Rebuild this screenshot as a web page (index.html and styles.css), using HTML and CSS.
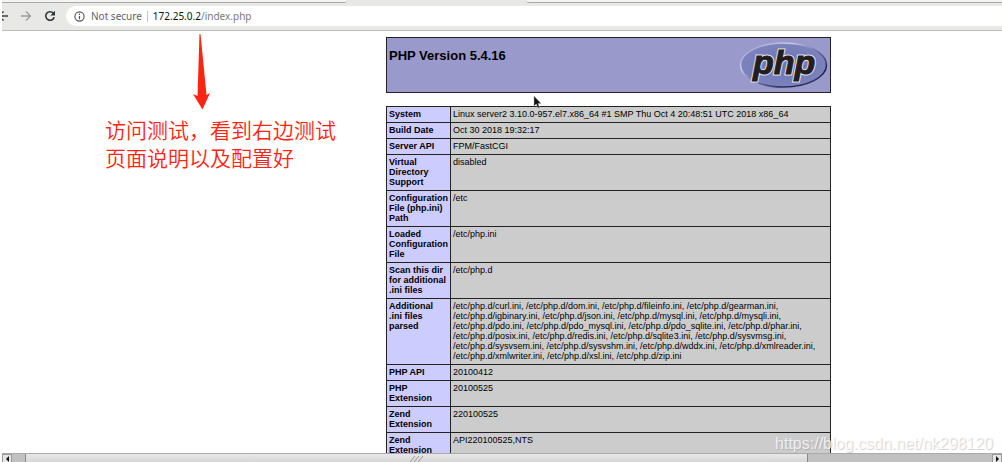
FILE: index.html
```
<!DOCTYPE html>
<html lang="en">
<head>
<meta charset="utf-8">
<title>phpinfo()</title>
<link rel="stylesheet" href="styles.css">
</head>
<body>
<div class="browser">
  <div class="tabs"><span class="tab tab-first"></span><span class="tab tab-rest"></span></div>
  <header class="toolbar">
    <button class="nav nav-back" aria-label="Back"><svg width="8" height="12" viewBox="0 0 8 12"><path d="M0 6H6M0 3L1.500 1.500M0 9L1.500 10.500" fill="none" stroke="#3c4043" stroke-width="1.5"/></svg></button>
    <button class="nav" aria-label="Forward"><svg width="12" height="12" viewBox="0 0 12 12"><path d="M1 6H10.500M6 1.500L10.500 6L6 10.500" fill="none" stroke="#9c9e9f" stroke-width="1.300"/></svg></button>
    <button class="nav nav-reload" aria-label="Reload"><svg width="12" height="12" viewBox="0 0 12 12"><path d="M9.300 3.100A4.300 4.300 0 1 0 10.200 7.300" fill="none" stroke="#303336" stroke-width="1.600"/><path d="M11 .8V5.500H6.300Z" fill="#303336"/></svg></button>
    <div class="omnibox">
      <svg width="11" height="11" viewBox="0 0 11 11"><circle cx="5.500" cy="5.500" r="4.600" fill="none" stroke="#505356" stroke-width="1.100"/><path d="M5.500 5V8.200M5.500 2.600V3.900" stroke="#505356" stroke-width="1.200"/></svg>
      <span class="security">Not secure</span>
      <span class="url"><b>172.25.0.2</b>/index.php</span>
    </div>
  </header>
  <main class="viewport">
    <div class="info">
      <div class="banner">
        <h1>PHP Version 5.4.16</h1>
        <svg class="logo" width="90" height="48" viewBox="0 0 90 48" role="img" aria-label="PHP logo">
          <defs><linearGradient id="rim" x1="0" y1="0" x2="1" y2="1"><stop offset="0" stop-color="#8f94c4"/><stop offset=".3" stop-color="#c9cce8"/><stop offset=".55" stop-color="#6469a0"/><stop offset=".8" stop-color="#1e2048"/><stop offset="1" stop-color="#55598c"/></linearGradient>
          <radialGradient id="face" cx=".5" cy=".5" r=".6"><stop offset="0" stop-color="#6c74b2"/><stop offset="1" stop-color="#8085be"/></radialGradient></defs>
          <ellipse cx="44.500" cy="24" rx="43" ry="22" fill="url(#face)" stroke="url(#rim)" stroke-width="1.500"/>
          <text class="logo-text logo-edge" x="14" y="33">php</text>
          <text class="logo-text" x="14" y="33">php</text>
        </svg>
      </div>
      <table class="details">
        <tbody>
        <tr><th scope="row">System</th><td>Linux server2 3.10.0-957.el7.x86_64 #1 SMP Thu Oct 4 20:48:51 UTC 2018 x86_64</td></tr>
        <tr><th scope="row">Build Date</th><td>Oct 30 2018 19:32:17</td></tr>
        <tr><th scope="row">Server API</th><td>FPM/FastCGI</td></tr>
        <tr><th scope="row">Virtual<br>Directory<br>Support</th><td>disabled</td></tr>
        <tr><th scope="row">Configuration<br>File (php.ini)<br>Path</th><td>/etc</td></tr>
        <tr><th scope="row">Loaded<br>Configuration<br>File</th><td>/etc/php.ini</td></tr>
        <tr><th scope="row">Scan this dir<br>for additional<br>.ini files</th><td>/etc/php.d</td></tr>
        <tr><th scope="row">Additional<br>.ini files<br>parsed</th><td>/etc/php.d/curl.ini, /etc/php.d/dom.ini, /etc/php.d/fileinfo.ini, /etc/php.d/gearman.ini,<br>/etc/php.d/igbinary.ini, /etc/php.d/json.ini, /etc/php.d/mysql.ini, /etc/php.d/mysqli.ini,<br>/etc/php.d/pdo.ini, /etc/php.d/pdo_mysql.ini, /etc/php.d/pdo_sqlite.ini, /etc/php.d/phar.ini,<br>/etc/php.d/posix.ini, /etc/php.d/redis.ini, /etc/php.d/sqlite3.ini, /etc/php.d/sysvmsg.ini,<br>/etc/php.d/sysvsem.ini, /etc/php.d/sysvshm.ini, /etc/php.d/wddx.ini, /etc/php.d/xmlreader.ini,<br>/etc/php.d/xmlwriter.ini, /etc/php.d/xsl.ini, /etc/php.d/zip.ini</td></tr>
        <tr><th scope="row">PHP API</th><td>20100412</td></tr>
        <tr><th scope="row">PHP<br>Extension</th><td>20100525</td></tr>
        <tr><th scope="row">Zend<br>Extension</th><td>220100525</td></tr>
        <tr><th scope="row">Zend<br>Extension</th><td>API220100525,NTS</td></tr>
        </tbody>
      </table>
    </div>
  </main>
  <div class="scrollbar">
    <button class="step" aria-label="Scroll left"><svg width="5" height="6" viewBox="0 0 5 6"><path d="M4 0V6L1 3Z" fill="#111"/></svg></button>
    <div class="track"><div class="thumb"><svg width="16" height="7" viewBox="0 0 16 7"><path d="M1 7L6 1M5 7L10 1M9 7L14 1" stroke="#999" fill="none"/></svg></div></div>
    <button class="step" aria-label="Scroll right"><svg width="5" height="6" viewBox="0 0 5 6"><path d="M1 0V6L4 3Z" fill="#111"/></svg></button>
  </div>
</div>
<svg class="arrow" width="20" height="76" viewBox="0 0 20 76"><path d="M7.500 0H8.500L14.500 61L18 59L10.500 75.500L1 60L5.500 62Z" fill="#ff2412"/></svg>
<p class="note" lang="zh">访问测试，看到右边测试<br>页面说明以及配置好</p>
<svg class="pointer" width="9" height="14" viewBox="0 0 9 14"><path d="M1 1V11L3.300 9L5 13L6.500 12.300L5 8.500H8Z" fill="#111" stroke="#aaa" stroke-width=".5"/></svg>
<div class="watermark">https://blog.csdn.net/nk298120</div>
</body>
</html>
```
FILE: styles.css
```
* { box-sizing: border-box; }
body {
  margin: 0;
  background: #fff;
  color: #000;
  font-family: "Liberation Sans", Arial, sans-serif;
}
button { border: 0; padding: 0; background: none; }
svg { display: block; flex: none; }

.browser {
  display: flex;
  flex-direction: column;
  height: 100vh;
  padding-left: 2px;
  overflow: hidden;
}
.tabs {
  display: flex;
  justify-content: space-between;
  height: 3px;
  flex: none;
  background: #e7e7e5;
}
.tab { background: #f4f4f3; border-bottom: 1px solid #a9a9a9; }
.tab-first { width: 345px; border-bottom-right-radius: 4px; }
.tab-rest { width: 476px; border-bottom-left-radius: 4px; }

.toolbar {
  display: flex;
  align-items: center;
  flex: none;
  height: 28px;
  padding-bottom: 1px;
  background: #e8e8e6;
  border-bottom: 1px solid #bcbcba;
}
.nav { margin-right: 12px; }
.nav-back { margin-right: 10px; }
.nav-reload { margin-right: 10px; }
.omnibox {
  display: flex;
  align-items: center;
  flex: 1;
  height: 20px;
  padding-left: 8px;
  border-radius: 10px 0 0 10px;
  background: #fff;
  font: 10px/14px "Noto Sans", sans-serif;
  color: #5f6163;
}
.security {
  margin-left: 6px;
  padding-right: 5px;
  border-right: 1px solid #c4c4c4;
  line-height: 11px;
}
.url { margin-left: 5px; color: #77797b; }
.url b { font-weight: 400; color: #111; }

.viewport {
  flex: 1;
  min-height: 0;
  overflow: hidden;
  display: flex;
  justify-content: center;
  align-items: flex-start;
  padding: 6px 0 0 213px;
}
.info { width: 445px; flex: none; }
.banner {
  display: flex;
  justify-content: space-between;
  align-items: flex-start;
  height: 56px;
  margin-bottom: 13px;
  padding: 3px 1px 0 2px;
  border: 1px solid #222;
  background: #9999cc;
}
.banner h1 {
  margin: 5px 0 0;
  font-size: 13px;
  line-height: 20px;
}
.logo-text {
  font: italic bold 34px "Liberation Sans", Arial, sans-serif;
  fill: #221e20;
  stroke: #221e20;
  stroke-width: 1px;
}
.logo-edge {
  stroke: #e4e4ee;
  stroke-width: 3px;
}
.details {
  width: 100%;
  border-collapse: collapse;
  font-size: 9px;
  line-height: 10px;
}
.details th,
.details td {
  border: 1px solid #222;
  padding: 2px 2px 3px;
  text-align: left;
  vertical-align: top;
  white-space: nowrap;
}
.details th { width: 64px; background: #ccccff; }
.details td { background: #ccc; }

.scrollbar {
  display: flex;
  flex: none;
  height: 9px;
  background: #c1c1c1;
  border-top: 1px solid #aaa;
}
.step {
  display: flex;
  align-items: center;
  justify-content: center;
  width: 10px;
  border: 1px solid #999;
  border-bottom: 0;
  background: #e6e6e6;
}
.track { flex: 1; padding-left: 13px; }
.thumb {
  display: flex;
  align-items: center;
  justify-content: center;
  width: 81%;
  height: 100%;
  border: 1px solid #888;
  border-width: 0 1px;
  background: linear-gradient(#e8e8e8, #d6d6d6);
}

/* Annotations drawn over the page */
.arrow { position: absolute; left: 192px; top: 34px; }
.note {
  position: absolute;
  left: 105px;
  top: 115px;
  margin: 0;
  font: 350 21px/28px "Noto Sans CJK SC", sans-serif;
  color: #ff2412;
  white-space: nowrap;
}
.pointer { position: absolute; left: 533px; top: 95px; }
.watermark {
  position: absolute;
  right: 9px;
  bottom: 8px;
  font-size: 16px;
  line-height: 20px;
  color: rgba(255, 255, 255, .75);
  text-shadow: 1px 1px 1px rgba(120, 120, 120, .35);
}
```
